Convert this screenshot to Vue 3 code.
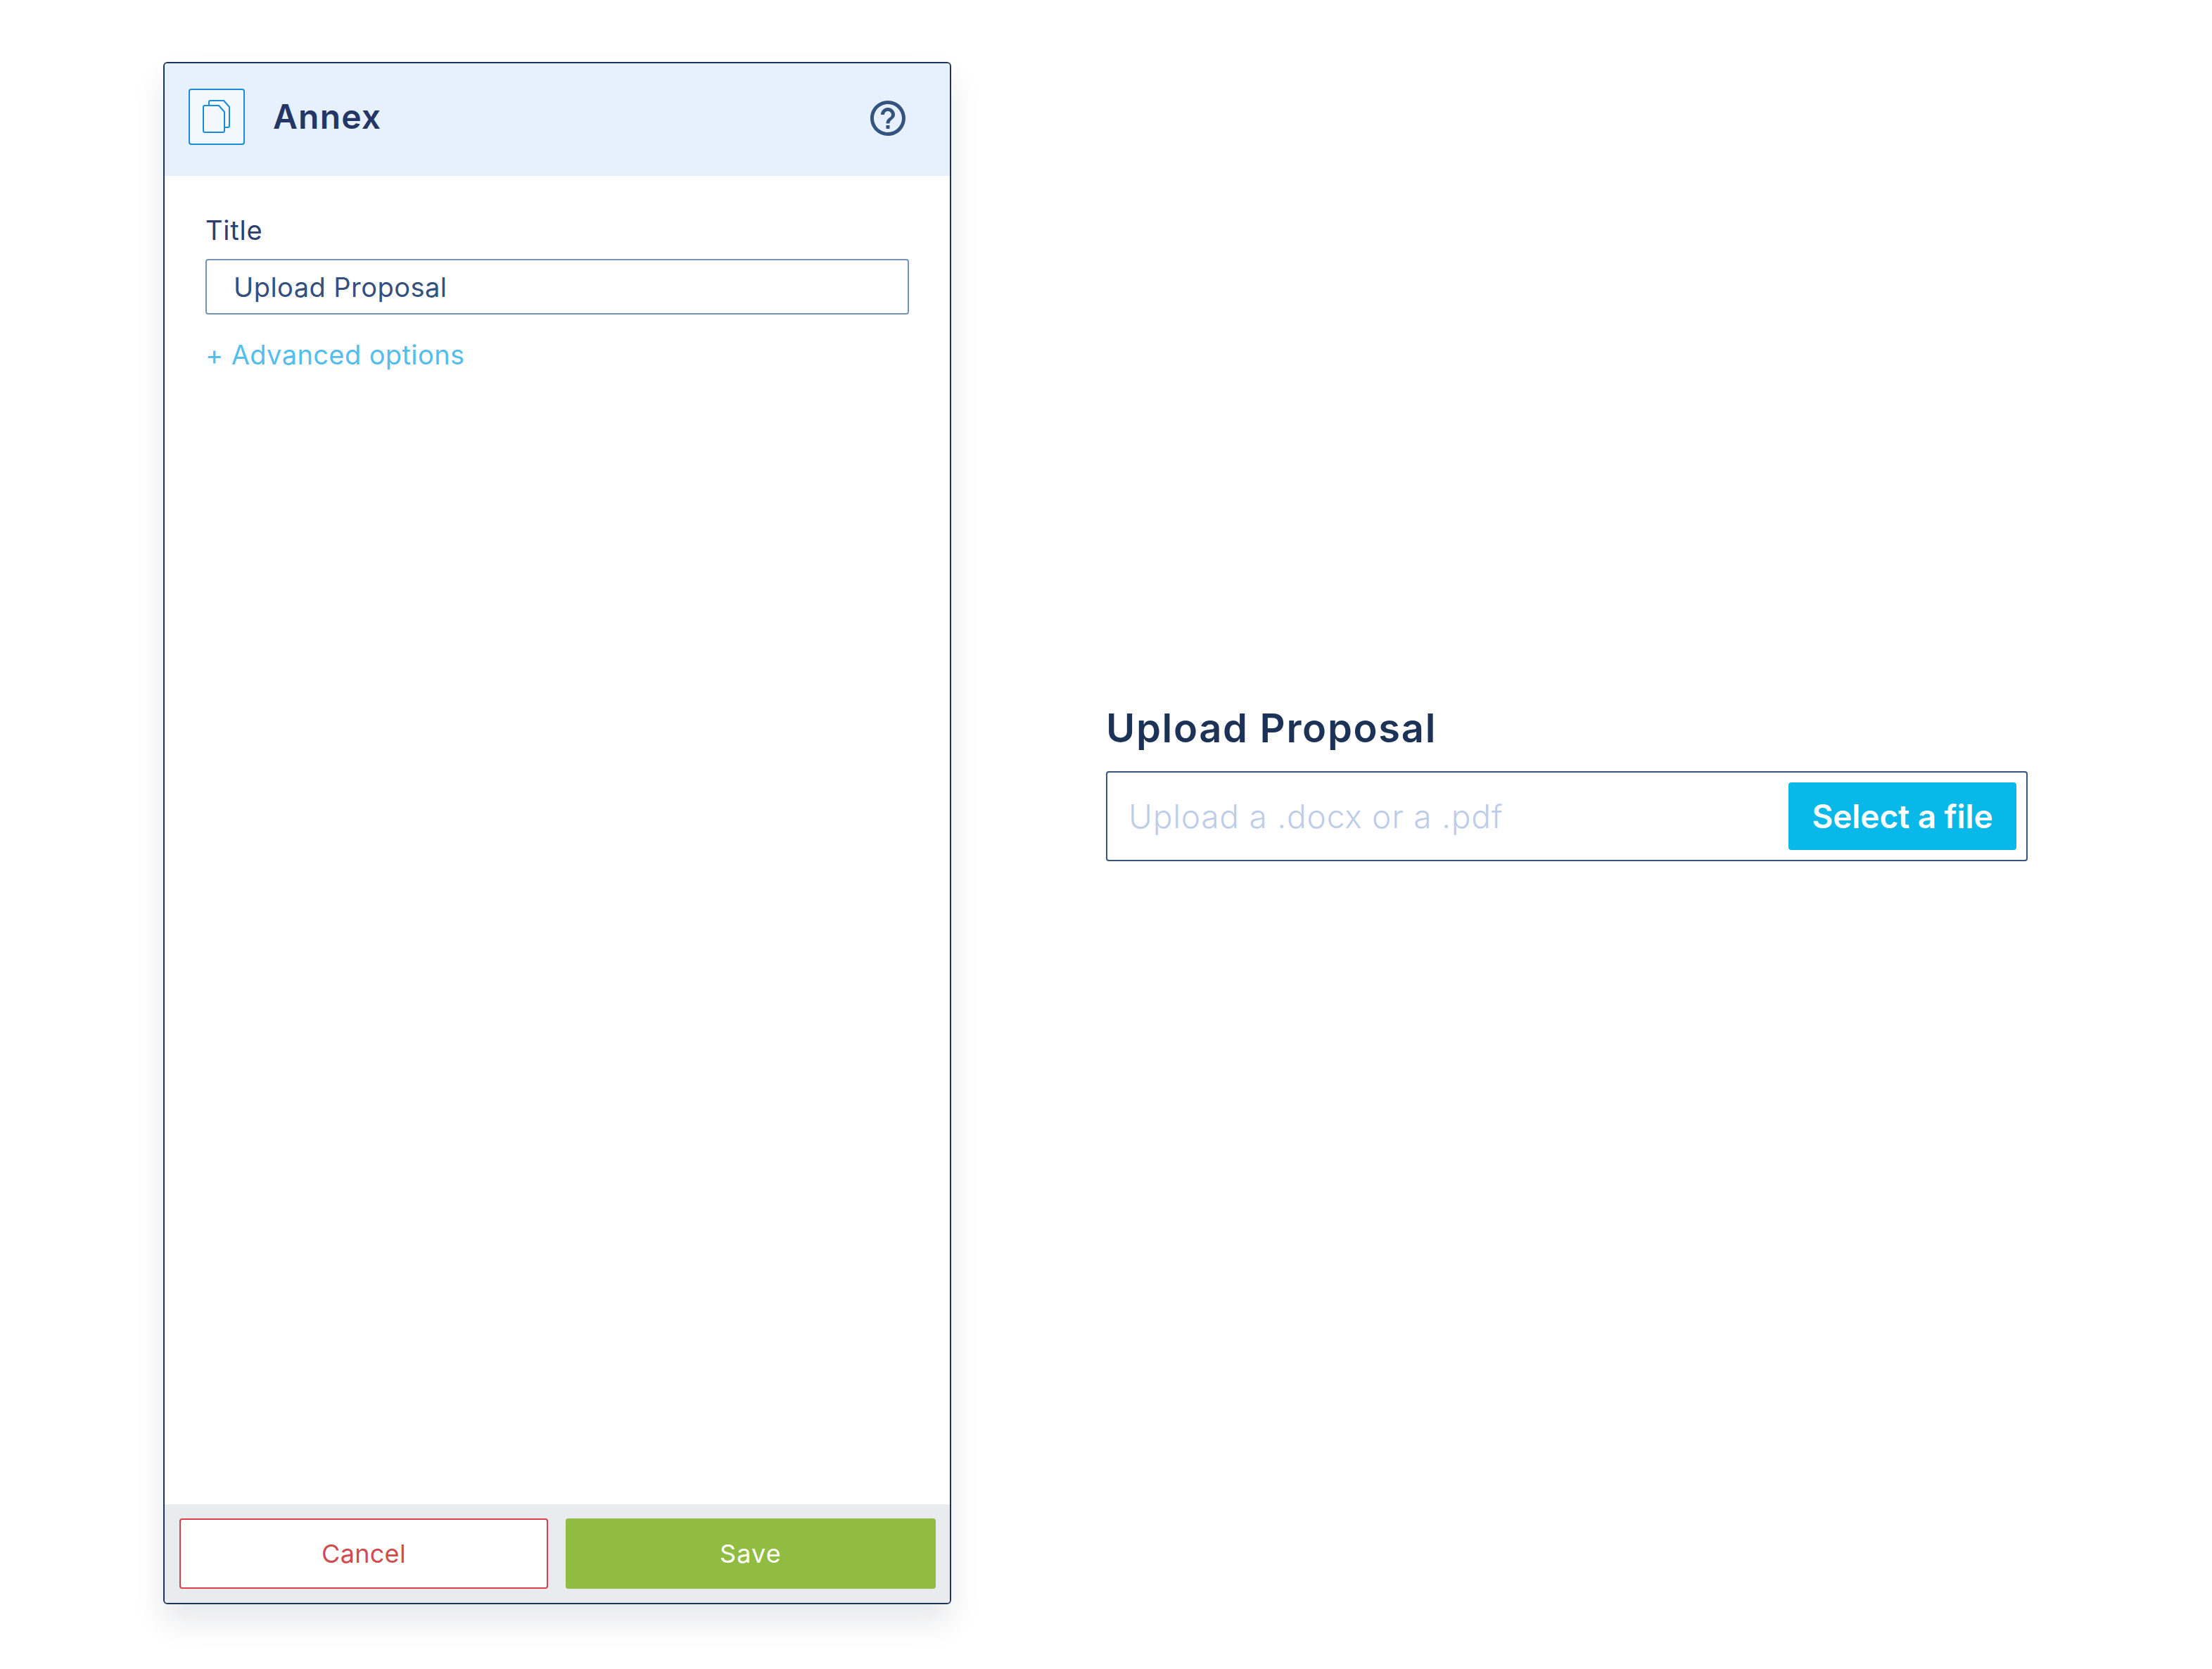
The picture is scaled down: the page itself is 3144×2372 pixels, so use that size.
<script setup>
import { ref } from 'vue';

const title = ref('Upload Proposal');
</script>

<template>
  <div class="page">
    <section class="panel">
      <header class="panel-header">
        <div class="type-icon">
          <svg width="76" height="76" viewBox="0 0 76 76" fill="none" stroke="#1a8bd8" stroke-width="2" stroke-linejoin="round">
            <path d="M27 21V17a2 2 0 0 1 2-2H48l8 9V51a2 2 0 0 1-2 2H49" />
            <path d="M19 24a2 2 0 0 1 2-2H41l8 9V58a2 2 0 0 1-2 2H21a2 2 0 0 1-2-2Z" fill="#f3f8ff" />
          </svg>
        </div>
        <h1 class="panel-title">Annex</h1>
        <svg class="help" width="60" height="60" viewBox="0 0 24 24" fill="#34547f">
          <path d="M11 18h2v-2h-2v2zm1-16C6.48 2 2 6.48 2 12s4.48 10 10 10 10-4.48 10-10S17.52 2 12 2zm0 18c-4.41 0-8-3.59-8-8s3.59-8 8-8 8 3.59 8 8-3.59 8-8 8zm0-14c-2.21 0-4 1.79-4 4h2c0-1.1.9-2 2-2s2 .9 2 2c0 2-3 1.75-3 5h2c0-2.25 3-2.5 3-5 0-2.21-1.79-4-4-4z" />
        </svg>
      </header>

      <div class="panel-body">
        <label class="field-label" for="title">Title</label>
        <input id="title" v-model="title" class="field-input" type="text" />
        <a class="advanced" href="#">+ Advanced options</a>
      </div>

      <footer class="panel-footer">
        <button class="btn btn-cancel">Cancel</button>
        <button class="btn btn-save">Save</button>
      </footer>
    </section>

    <section class="preview">
      <h2 class="preview-title">{{ title }}</h2>
      <div class="upload">
        <input class="upload-input" type="text" placeholder="Upload a .docx or a .pdf" />
        <button class="btn-select">Select a file</button>
      </div>
    </section>
  </div>
</template>

<style>
body {
  background: #fff;
}
</style>

<style scoped>
.page {
  display: flex;
  align-items: stretch;
  gap: 220px;
  box-sizing: border-box;
  width: 3144px;
  height: 2372px;
  padding: 88px 262px 92px 232px;
  font-family: Inter, "Liberation Sans", sans-serif;
  color: #233665;
}

.panel {
  display: flex;
  flex-direction: column;
  box-sizing: border-box;
  width: 1120px;
  flex-shrink: 0;
  border: 2px solid #1d3559;
  border-radius: 6px;
  background: #fff;
  box-shadow: 0 24px 44px rgba(20, 30, 50, 0.1);
  overflow: hidden;
}

.panel-header {
  display: flex;
  align-items: center;
  height: 160px;
  box-sizing: border-box;
  padding: 0 58px 0 34px;
  background: #e6f1fd;
}

.type-icon {
  width: 80px;
  height: 80px;
  box-sizing: border-box;
  margin-top: -8px;
  border: 2px solid #1a8bd8;
  border-radius: 4px;
  background: #f3f8ff;
}

.type-icon svg {
  display: block;
}

.panel-title {
  margin: -8px 0 0 40px;
  font-size: 48px;
  font-weight: 600;
  letter-spacing: 1.2px;
  line-height: 60px;
  flex: 1;
}

.help {
  margin-top: -4px;
}

.panel-body {
  display: flex;
  flex-direction: column;
  align-items: flex-start;
  flex: 1;
  padding: 52px 58px 0;
}

.field-label {
  font-size: 38px;
  letter-spacing: 0.8px;
  line-height: 50px;
  color: #2d3f6e;
}

.field-input {
  width: 100%;
  height: 79px;
  box-sizing: border-box;
  margin-top: 16px;
  padding: 0 38px;
  border: 2px solid #7893bb;
  border-radius: 4px;
  font: inherit;
  font-size: 38px;
  letter-spacing: 0.45px;
  color: #34507f;
  outline: none;
}

.advanced {
  margin-top: 32px;
  font-size: 38px;
  letter-spacing: 0.4px;
  line-height: 50px;
  color: #55bdec;
  text-decoration: none;
}

.panel-footer {
  display: flex;
  gap: 25px;
  padding: 20px 20px 20px 21px;
  background: #e9ebef;
}

.btn {
  height: 100px;
  box-sizing: border-box;
  border-radius: 4px;
  font-family: inherit;
  font-size: 36px;
  cursor: pointer;
}

.btn-cancel {
  width: 524px;
  border: 2px solid #d9404a;
  background: #fff;
  color: #d04a4e;
  letter-spacing: 0.3px;
}

.btn-save {
  flex: 1;
  border: none;
  background: #90bd41;
  color: #fff;
  letter-spacing: 1.2px;
}

.preview {
  display: flex;
  flex-direction: column;
  justify-content: center;
  flex: 1;
  padding-bottom: 145px;
}

.preview-title {
  margin: 0 0 25px;
  font-size: 56px;
  font-weight: 600;
  letter-spacing: 1.7px;
  line-height: 72px;
  color: #1d3257;
}

.upload {
  display: flex;
  align-items: center;
  height: 128px;
  box-sizing: border-box;
  padding: 0 14px 0 30px;
  border: 2px solid #38547f;
  border-radius: 4px;
}

.upload-input {
  flex: 1;
  min-width: 0;
  padding: 0;
  border: none;
  outline: none;
  font: inherit;
  font-size: 46px;
  font-weight: 300;
  letter-spacing: 0.8px;
  color: #233665;
}

.upload-input::placeholder {
  color: #bdcde8;
  opacity: 1;
}

.btn-select {
  width: 324px;
  height: 96px;
  border: none;
  border-radius: 4px;
  background: #08b8e8;
  color: #fff;
  font-family: inherit;
  font-size: 46px;
  font-weight: 600;
  letter-spacing: -0.1px;
  cursor: pointer;
}
</style>
